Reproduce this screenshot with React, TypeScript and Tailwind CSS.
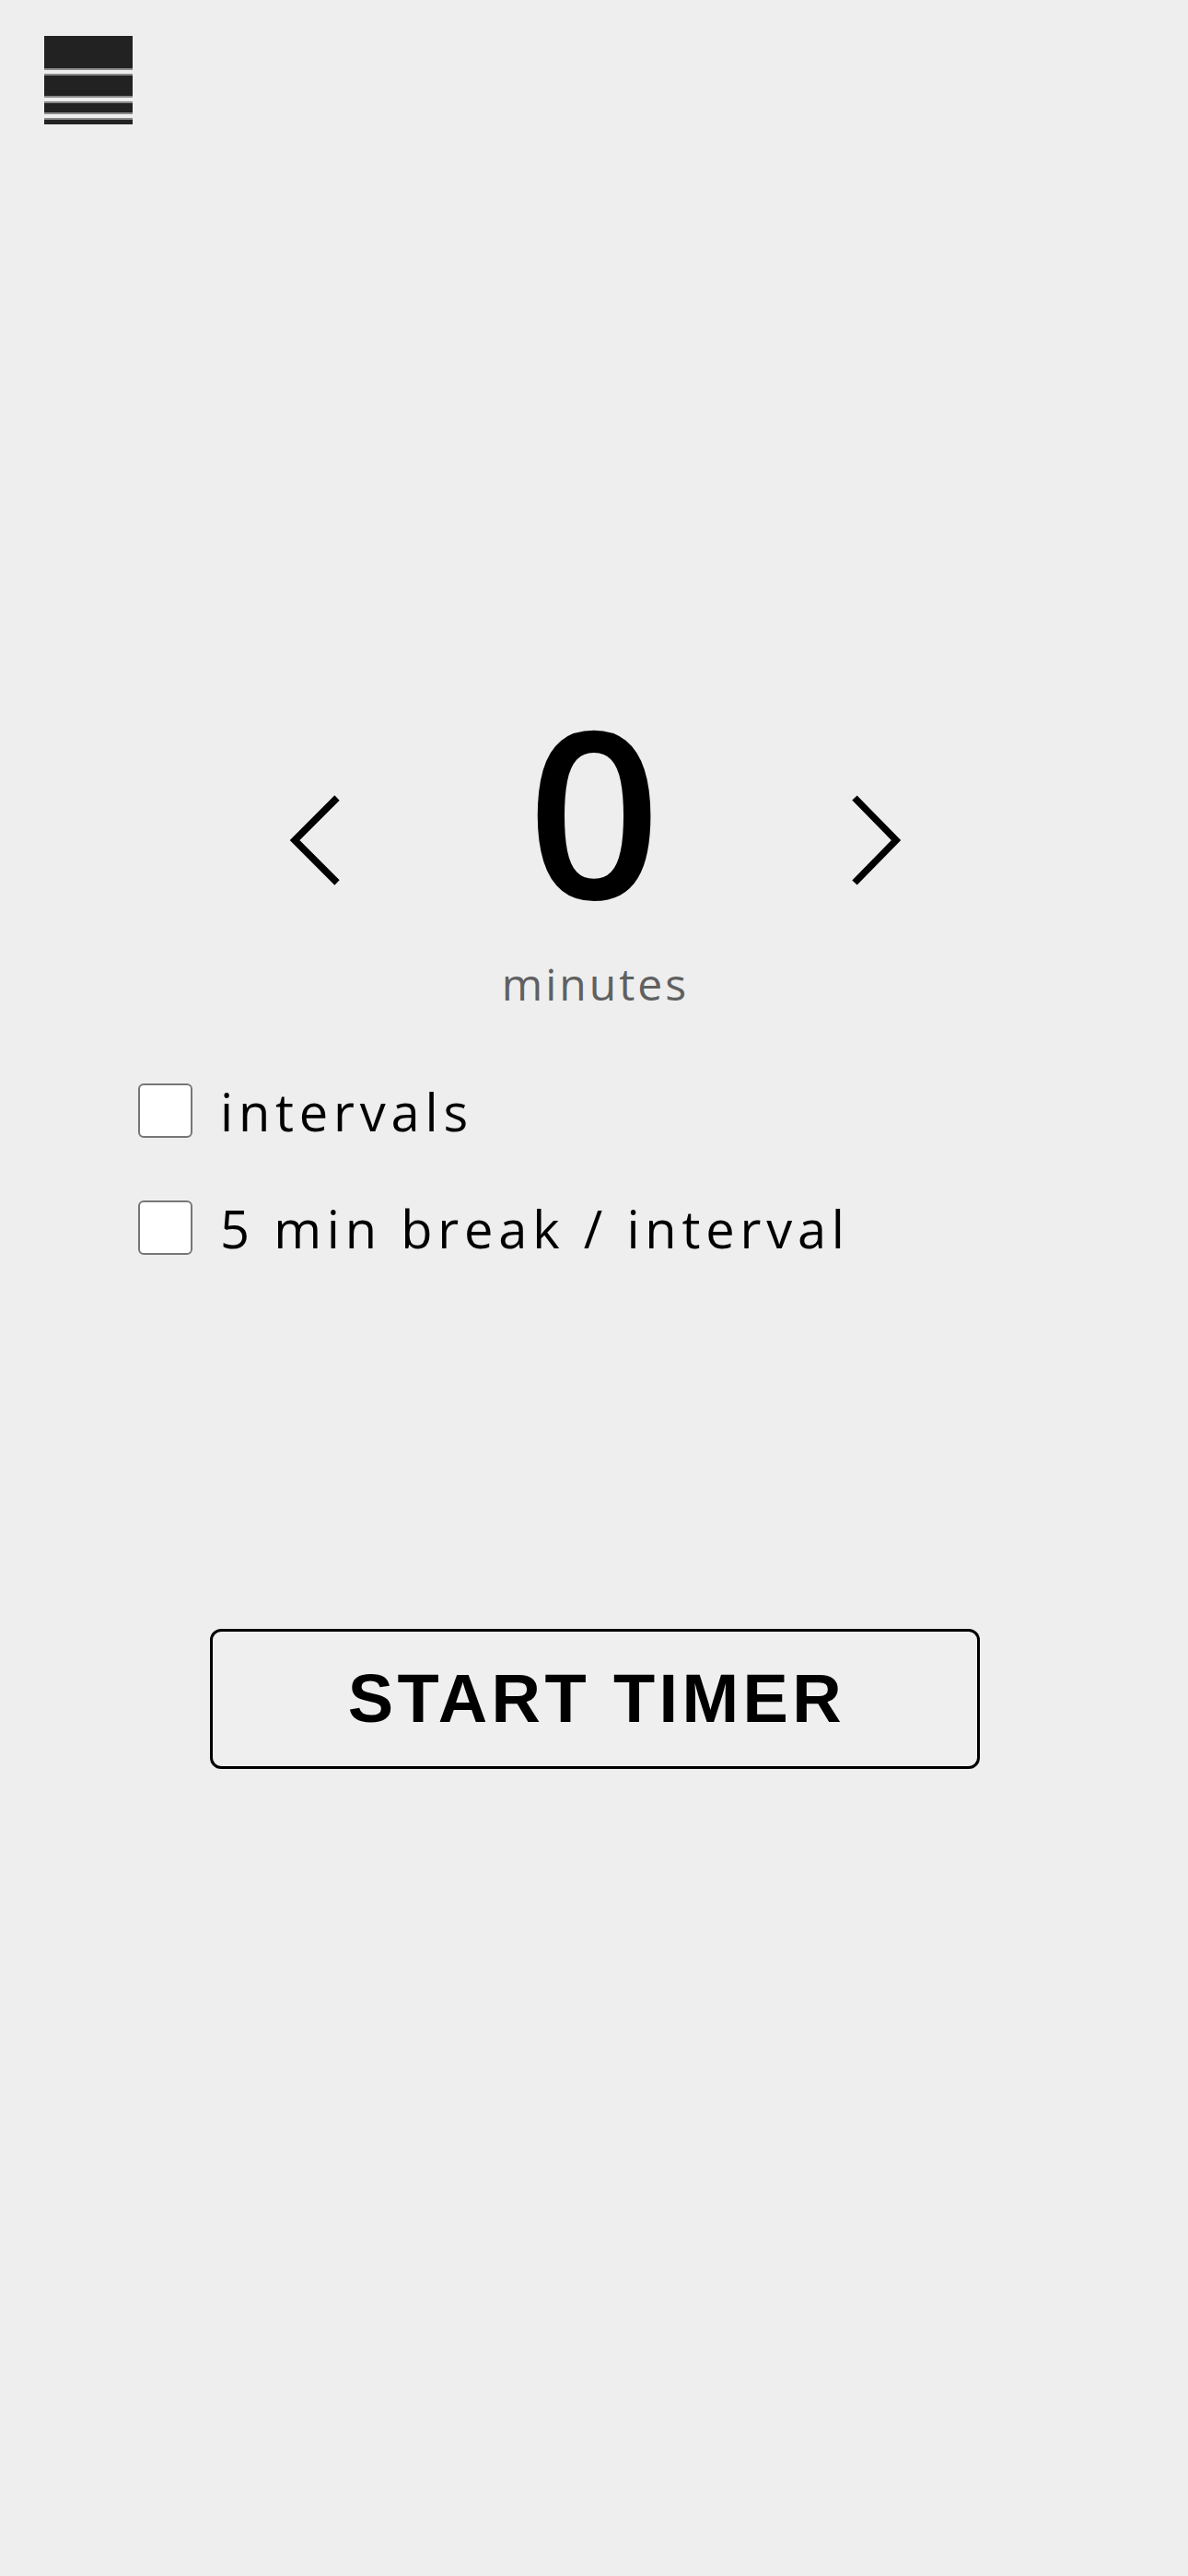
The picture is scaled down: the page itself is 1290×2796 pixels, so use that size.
import React, { useState } from "react";

// stacked bars as they appear in the corner menu icon
const menuBars = [
  "h-[35px] bg-[#222222]",
  "h-[2px] bg-[#8a8a8a]",
  "h-[4px] bg-[#eeeeee]",
  "h-[2px] bg-[#8a8a8a]",
  "h-[22px] bg-[#222222]",
  "h-[2px] bg-[#8a8a8a]",
  "h-[4px] bg-[#eeeeee]",
  "h-[2px] bg-[#8a8a8a]",
  "h-[10px] bg-[#222222]",
  "h-[2px] bg-[#8a8a8a]",
  "h-[4px] bg-[#eeeeee]",
  "h-[2px] bg-[#8a8a8a]",
  "h-[5px] bg-[#222222]",
];

function Chevron({ dir }: { dir: "left" | "right" }) {
  const points = dir === "left" ? "56,4 10,50 56,96" : "7,4 52,50 7,96";
  return (
    <svg width="60" height="100" viewBox="0 0 60 100" className="mt-[110px] shrink-0">
      <polyline points={points} fill="none" stroke="#000" strokeWidth="7.5" strokeLinejoin="miter" />
    </svg>
  );
}

function CheckRow({ label }: { label: string }) {
  const [on, setOn] = useState(false);
  return (
    <label className="flex items-center gap-[30px] cursor-pointer">
      <span
        onClick={() => setOn(!on)}
        className="w-[59px] h-[59px] shrink-0 rounded-[6px] border-2 border-[#767676] bg-white"
      />
      <span className="text-[56px] leading-none tracking-[5.8px] text-black font-['Open_Sans',sans-serif]">
        {label}
      </span>
    </label>
  );
}

export default function App() {
  const [minutes, setMinutes] = useState(0);

  return (
    <div className="w-full h-[2796px] bg-[#eeeeee] font-['Open_Sans',sans-serif]">
      {/* Menu */}
      <div className="pt-[39px] pl-[48px]">
        <button className="flex flex-col w-[96px]" title="Menu">
          {menuBars.map((c, i) => (
            <div key={i} className={`w-full ${c}`} />
          ))}
        </button>
      </div>

      {/* Minutes picker */}
      <div className="mt-[617px] flex justify-center gap-[203px]">
        <button onClick={() => setMinutes(Math.max(0, minutes - 1))} className="flex items-start">
          <Chevron dir="left" />
        </button>
        <div className="w-[145px] text-center text-[253px] leading-none font-semibold text-black">{minutes}</div>
        <button onClick={() => setMinutes(minutes + 1)} className="flex items-start">
          <Chevron dir="right" />
        </button>
      </div>
      <p className="mt-[39px] text-center text-[48px] leading-none tracking-[3px] pl-[3px] text-[#606060]">
        minutes
      </p>

      {/* Options */}
      <div className="mt-[84px] pl-[150px] flex flex-col gap-[68px]">
        <CheckRow label="intervals" />
        <CheckRow label="5 min break / interval" />
      </div>

      {/* Start */}
      <div className="mt-[406px] flex justify-center">
        <button className="w-[836px] h-[152px] ml-[2px] rounded-[12px] border-[3px] border-black bg-[#efefef] flex items-center justify-center">
          <span className="pl-[4px] text-[74px] leading-none font-bold tracking-[4.4px] text-black font-['Liberation_Sans',Arial,sans-serif]">
            START TIMER
          </span>
        </button>
      </div>
    </div>
  );
}
